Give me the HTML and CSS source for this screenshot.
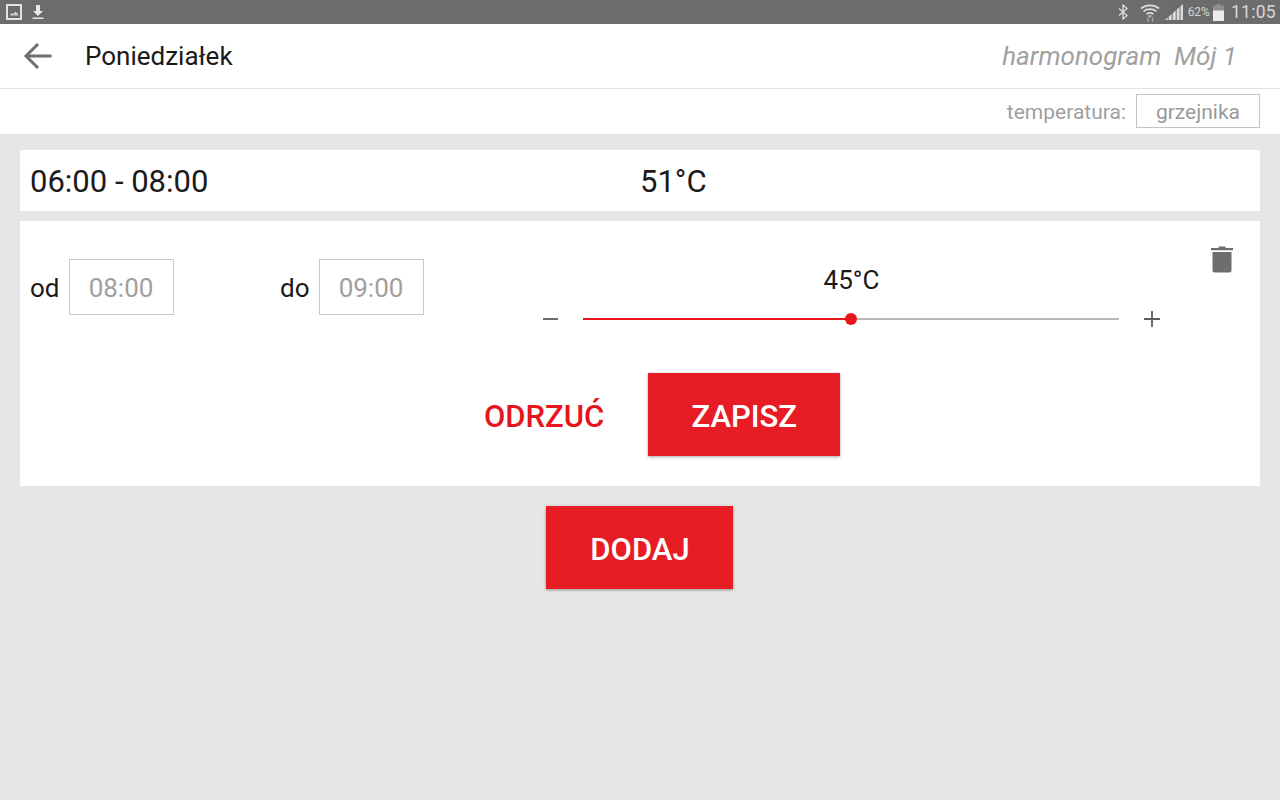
FILE: index.html
```html
<!DOCTYPE html>
<html lang="pl">
<head>
    <meta charset="UTF-8">
    <title>Poniedziałek</title>
    <link rel="stylesheet" href="styles.css">
</head>
<body>
    <div class="status-bar">
        <div class="status-left">
            <svg width="16" height="16" viewBox="0 0 16 16"><rect x="1" y="1" width="14" height="14" fill="#6b6b6b" stroke="#e0e0e0" stroke-width="2"/><path d="M4 11l2-2 1.500 1 2-2.500L12 10v1.500H4z" fill="#d0d0d0"/></svg>
            <svg width="16" height="16" viewBox="0 0 16 16"><path d="M6 1h4v6h3l-5 5-5-5h3zM2.500 13.500h11V15h-11z" fill="#e8e8e8"/></svg>
        </div>
        <div class="status-right">
            <svg class="ic-bt" width="10" height="16" viewBox="0 0 10 16"><path d="M1 4.500l8 7-4 3.500V1l4 3.500-8 7" fill="none" stroke="#d8d8d8" stroke-width="1.400"/></svg>
            <svg class="ic-wifi" width="20" height="19" viewBox="0 0 20 19"><path d="M1 5.500C6 1.200 14 1.200 19 5.500M3.500 8.300C7 5.500 13 5.500 16.500 8.300M6.500 11c2.300-1.500 4.700-1.500 7 0" fill="none" stroke="#dcdcdc" stroke-width="1.700"/><path d="M8 12.500h4L10 14.500z" fill="#dcdcdc"/><path d="M8 14v5M12.500 19v-5" stroke="#a0a0a0" stroke-width="1.600"/></svg>
            <svg class="ic-signal" width="18" height="18" viewBox="0 0 18 18"><path d="M0 17L18 1v16z" fill="#dcdcdc"/><path d="M3.200 0v18M7.200 0v18M11.200 0v18M15 0v18" stroke="#6c6c6c" stroke-width="1"/></svg>
            <span class="battery-pct">62%</span>
            <svg class="ic-battery" width="11" height="17" viewBox="0 0 11 17"><path d="M3.500 0h4v1.500H11V17H0V1.500h3.500z" fill="#8f8f8f"/><path d="M0 6.500h11V17H0z" fill="#ececec"/></svg>
            <span class="clock">11:05</span>
        </div>
    </div>

    <div class="header">
        <svg class="back" width="30" height="28" viewBox="0 0 30 28"><path d="M28.500 14H3M15 2L3 14l12 12" fill="none" stroke="#6e6e6e" stroke-width="3"/></svg>
        <div class="title">Poniedziałek</div>
        <div class="schedule">harmonogram&nbsp; Mój 1</div>
    </div>

    <div class="subbar">
        <span class="sub-label">temperatura:</span>
        <div class="sub-box">grzejnika</div>
    </div>

    <div class="content">
        <div class="card range-row">
            <div class="range-time">06:00 - 08:00</div>
            <div class="range-temp">51°C</div>
        </div>

        <div class="card edit">
            <div class="edit-top">
                <div class="field">
                    <span class="field-label">od</span>
                    <div class="field-box">08:00</div>
                </div>
                <div class="field">
                    <span class="field-label">do</span>
                    <div class="field-box">09:00</div>
                </div>
                <div class="temp-col">
                    <div class="temp-value">45°C</div>
                    <div class="slider-row">
                        <span class="minus"></span>
                        <div class="track">
                            <div class="track-on"></div>
                            <div class="track-off"></div>
                            <span class="thumb"></span>
                        </div>
                        <svg class="plus" width="16" height="16" viewBox="0 0 16 16"><path d="M8 0v16M0 8h16" stroke="#5e5e5e" stroke-width="1.800"/></svg>
                    </div>
                </div>
                <svg class="trash" width="22" height="28" viewBox="0 0 22 28"><path d="M7.500 1.500h7V3H22v2.200H0V3h7.500z" fill="#6e6e6e"/><path d="M1.500 7h19v18.500A2 2 0 0 1 18.500 27.500h-15A2 2 0 0 1 1.500 25.500z" fill="#6e6e6e"/></svg>
            </div>
            <div class="edit-actions">
                <span class="btn-text">ODRZUĆ</span>
                <div class="btn btn-save">ZAPISZ</div>
            </div>
        </div>

        <div class="add-row">
            <div class="btn btn-add">DODAJ</div>
        </div>
    </div>
</body>
</html>
```

FILE: styles.css
```css
html, body {
    height: 100%;
}

body {
    margin: 0;
    height: 800px;
    overflow: hidden;
    display: flex;
    flex-direction: column;
    font-family: Roboto, "Liberation Sans", sans-serif;
    background: #e6e6e6;
    color: #1a1a1a;
}

.status-bar {
    height: 24px;
    flex: none;
    background: #6c6c6c;
    display: flex;
    justify-content: space-between;
    align-items: center;
    padding: 0 4px 0 6px;
    box-sizing: border-box;
}

.status-left {
    display: flex;
    align-items: center;
    gap: 8px;
}

.status-right {
    display: flex;
    align-items: center;
    color: #d8d8d8;
}

.ic-bt { margin-right: 12px; }
.ic-wifi { margin-right: 5px; }
.ic-signal { margin-right: 5px; }

.battery-pct {
    font-size: 12px;
    margin-right: 3px;
}

.clock {
    font-size: 17.500px;
    margin-left: 7px;
    letter-spacing: 0.3px;
}

.header {
    height: 65px;
    flex: none;
    box-sizing: border-box;
    background: #fff;
    border-bottom: 1px solid #e2e2e2;
    display: flex;
    align-items: center;
    padding: 0 43px 0 23px;
}

.back {
    margin-right: 32px;
}

.title {
    font-size: 26px;
    flex: 1;
}

.schedule {
    font-size: 26px;
    font-style: italic;
    color: #a0a0a0;
}

.subbar {
    height: 45px;
    flex: none;
    box-sizing: border-box;
    background: #fff;
    display: flex;
    justify-content: flex-end;
    align-items: center;
    padding: 0 20px 1px 0;
}

.sub-label {
    font-size: 21px;
    color: #a0a0a0;
    margin-right: 10px;
    padding-top: 2px;
}

.sub-box {
    width: 124px;
    height: 34px;
    box-sizing: border-box;
    border: 1px solid #c4c4c4;
    padding-top: 2px;
    display: flex;
    align-items: center;
    justify-content: center;
    font-size: 21px;
    color: #999;
}

.content {
    flex: 1;
    padding: 16px 20px 0;
}

.card {
    background: #fff;
}

.range-row {
    height: 61px;
    display: flex;
    align-items: center;
    padding: 2px 0 0 10px;
    box-sizing: border-box;
    margin-bottom: 10px;
}

.range-time {
    width: 610px;
    font-size: 31px;
}

.range-temp {
    font-size: 31px;
}

.edit {
    height: 265px;
    padding: 24px 0 0 10px;
    box-sizing: border-box;
}

.edit-top {
    display: flex;
    height: 108px;
}

.field {
    width: 250px;
    height: 56px;
    margin-top: 14px;
    display: flex;
    align-items: center;
}

.field + .field {
    width: 263px;
}

.field-label {
    font-size: 26px;
    margin-right: 9px;
    padding-top: 2px;
}

.field-box {
    width: 105px;
    height: 56px;
    box-sizing: border-box;
    border: 1px solid #c8c8c8;
    padding-top: 2px;
    display: flex;
    align-items: center;
    justify-content: center;
    font-size: 26px;
    color: #a0a0a0;
}

.temp-col {
    width: 617px;
}

.temp-value {
    width: 617px;
    text-align: center;
    font-size: 26px;
    margin-top: 20px;
    height: 30px;
    line-height: 30px;
}

.slider-row {
    display: flex;
    align-items: center;
    height: 20px;
    margin-top: 14px;
}

.minus {
    width: 15px;
    height: 2px;
    background: #6e6e6e;
    margin-right: 25px;
}

.track {
    position: relative;
    display: flex;
    width: 536px;
    margin-right: 25px;
}

.track-on {
    width: 268px;
    height: 2px;
    background: #e8141c;
}

.track-off {
    flex: 1;
    height: 2px;
    background: #b8b8b8;
}

.thumb {
    position: absolute;
    left: 262px;
    top: -5px;
    width: 12px;
    height: 12px;
    border-radius: 50%;
    background: #e8141c;
}

.trash {
    margin: 0 0 0 51px;
}

.edit-actions {
    display: flex;
    align-items: center;
    margin-top: 20px;
    padding-left: 454px;
}

.btn-text {
    font-size: 31px;
    font-weight: 500;
    color: #e8141c;
    margin-right: 44px;
    padding-top: 3px;
}

.btn {
    background: #e81c24;
    color: #fff;
    font-size: 31px;
    font-weight: 500;
    height: 83px;
    box-sizing: border-box;
    padding-top: 3px;
    display: flex;
    align-items: center;
    justify-content: center;
    box-shadow: 0 1px 3px rgba(0,0,0,0.35);
}

.btn-save {
    width: 192px;
}

.add-row {
    display: flex;
    justify-content: center;
    margin-top: 20px;
    padding-right: 2px;
}

.btn-add {
    width: 187px;
    padding-left: 2px;
}
```
